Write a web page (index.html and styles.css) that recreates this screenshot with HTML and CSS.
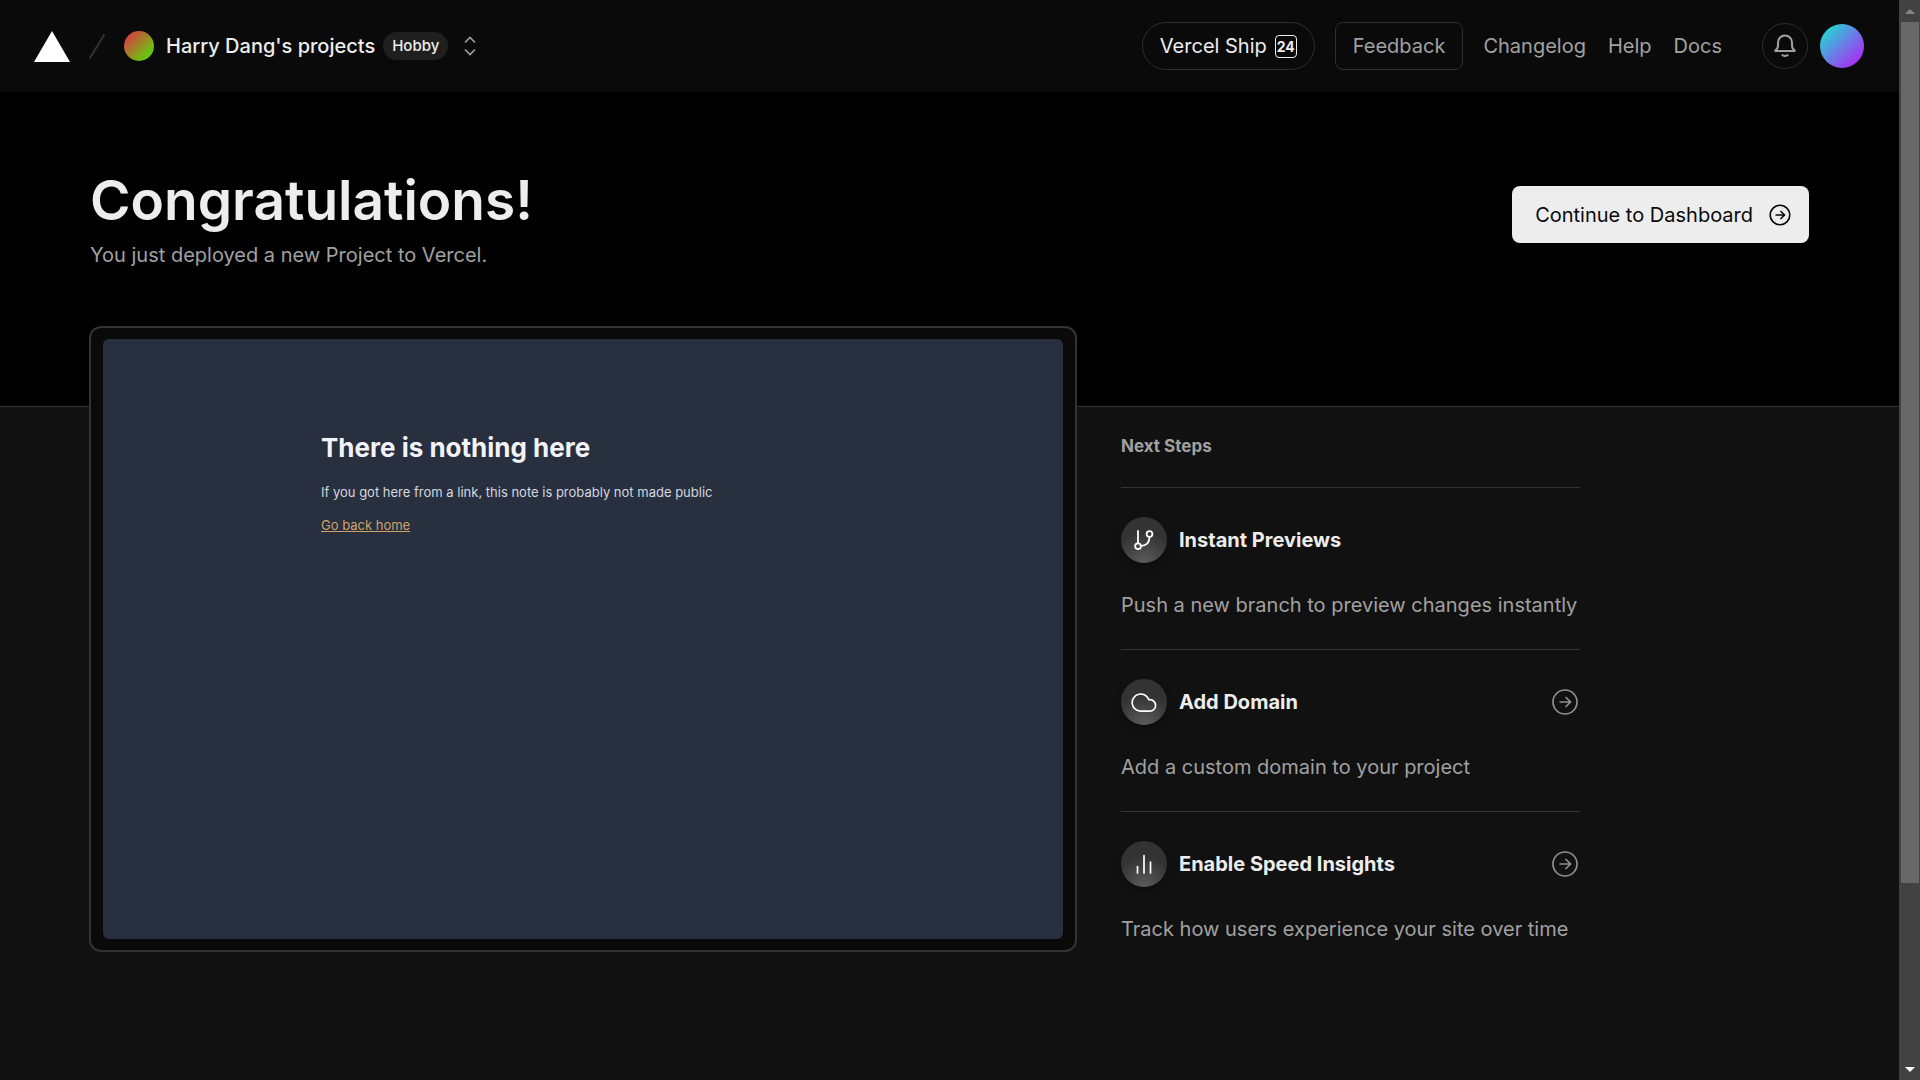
FILE: index.html
```html
<!DOCTYPE html>
<html lang="en">
<head>
<meta charset="utf-8">
<meta name="viewport" content="width=device-width, initial-scale=1">
<title>Congratulations! – Vercel</title>
<link rel="stylesheet" href="styles.css">
</head>
<body>
<div class="window">
  <div class="page">
    <header class="topbar">
      <div class="scope">
        <a class="logo" href="#" aria-label="Vercel">
          <svg width="36" height="31" viewBox="0 0 36 31"><path d="M18 0 36 31H0z" fill="#fff"/></svg>
        </a>
        <svg class="slash" width="18" height="28" viewBox="0 0 18 28" fill="none" stroke="#333" stroke-width="2" stroke-linecap="round"><path d="M2 26 16 3"/></svg>
        <a class="team" href="#"><span class="team-avatar"></span>Harry Dang's projects</a>
        <span class="badge">Hobby</span>
        <button class="switcher" type="button" aria-label="Switch team">
          <svg width="12" height="20" viewBox="0 0 12 20" fill="none" stroke="#a1a1a1" stroke-width="1.6"><path d="M1 6.500 6 1.500l5 5M1 13.500l5 5 5-5"/></svg>
        </button>
      </div>
      <nav class="nav">
        <a class="ship" href="#">Vercel Ship <span class="ship-year">24</span></a>
        <button class="feedback" type="button">Feedback</button>
        <div class="links">
          <a href="#">Changelog</a>
          <a href="#">Help</a>
          <a href="#">Docs</a>
        </div>
        <button class="bell" type="button" aria-label="Notifications">
          <svg width="22" height="24" viewBox="0 0 22 24" fill="none" stroke="#a1a1a1" stroke-width="2"><path d="M1.500 17v-.8c1.700-1 2.500-2.700 2.500-5V8.500a7 7 0 0 1 14 0v2.700c0 2.300.8 4 2.500 5v.8z"/><path d="M7.800 20.500c1.600 2 4.800 2 6.400 0"/></svg>
        </button>
        <button class="avatar" type="button" aria-label="Account"></button>
      </nav>
    </header>

    <section class="hero">
      <div>
        <h1>Congratulations!</h1>
        <p>You just deployed a new Project to Vercel.</p>
      </div>
      <a class="continue" href="#">Continue to Dashboard
        <svg width="22" height="22" viewBox="0 0 22 22" fill="none" stroke="currentColor" stroke-width="1.600"><circle cx="11" cy="11" r="9.800"/><path d="M6.500 11h9M11.500 7l4 4-4 4"/></svg>
      </a>
    </section>

    <main class="content">
      <section class="frame">
        <div class="preview">
          <h2>There is nothing here</h2>
          <p>If you got here from a link, this note is probably not made public</p>
          <a href="#">Go back home</a>
        </div>
      </section>

      <section class="steps">
        <h2>Next Steps</h2>
        <article class="step">
          <div class="step-head">
            <span class="step-icon"><svg width="20" height="22" viewBox="0 0 20 22" fill="none" stroke="#fff" stroke-width="1.800" stroke-linecap="round"><path d="M4 2v12M15.500 8c0 5.500-3 8.700-8.700 8.900"/><circle cx="4" cy="17.200" r="2.900"/><circle cx="15.500" cy="5" r="2.900"/></svg></span>
            <h3>Instant Previews</h3>
          </div>
          <p>Push a new branch to preview changes instantly</p>
        </article>
        <article class="step">
          <div class="step-head">
            <span class="step-icon"><svg width="26" height="22" viewBox="0 0 26 22" fill="none" stroke="#fff" stroke-width="1.700" stroke-linejoin="round"><path d="M17.800 8.600A8.600 8.600 0 1 0 9.600 20.200h9.200a5.800 5.800 0 0 0 0-11.600z"/></svg></span>
            <h3>Add Domain</h3>
            <a class="step-go" href="#" aria-label="Add Domain"><svg width="26" height="26" viewBox="0 0 26 26" fill="none" stroke="currentColor" stroke-width="1.700"><circle cx="13" cy="13" r="12"/><path d="M7.500 13h11M13.500 8l5 5-5 5"/></svg></a>
          </div>
          <p>Add a custom domain to your project</p>
        </article>
        <article class="step">
          <div class="step-head">
            <span class="step-icon"><svg width="20" height="20" viewBox="0 0 20 20" fill="none" stroke="#fff" stroke-width="1.700" stroke-linecap="round"><path d="M3.500 12.500V19M10 1.500V19M16.500 8V19"/></svg></span>
            <h3>Enable Speed Insights</h3>
            <a class="step-go" href="#" aria-label="Enable Speed Insights"><svg width="26" height="26" viewBox="0 0 26 26" fill="none" stroke="currentColor" stroke-width="1.700"><circle cx="13" cy="13" r="12"/><path d="M7.500 13h11M13.500 8l5 5-5 5"/></svg></a>
          </div>
          <p>Track how users experience your site over time</p>
        </article>
      </section>
    </main>
  </div>

  <div class="scrollbar" aria-hidden="true">
    <svg class="scroll-arrow" width="10" height="5" viewBox="0 0 10 5"><path d="M5 0 10 5H0z" fill="#868686"/></svg>
    <div class="scroll-track"><div class="scroll-thumb"></div></div>
    <svg class="scroll-arrow" width="10" height="5" viewBox="0 0 10 5"><path d="M0 0h10L5 5z" fill="#fff"/></svg>
  </div>
</div>
</body>
</html>
```
FILE: styles.css
```css
* { box-sizing: border-box; }
body {
  margin: 0;
  background: #111;
  color: #ededed;
  font: 20px/28px Inter, "Liberation Sans", sans-serif;
}
h1, h2, h3, p { margin: 0; }
a { color: inherit; text-decoration: none; }
button { padding: 0; background: none; border: 0; color: inherit; font: inherit; }
svg { display: block; flex: none; }

.window { display: flex; min-height: 100vh; }
.page { flex: 1; min-width: 0; }

.topbar {
  display: flex;
  align-items: center;
  justify-content: space-between;
  height: 92px;
  padding: 0 35px 0 34px;
  background: #0a0a0a;
}
.scope, .nav, .team, .links { display: flex; align-items: center; }
.slash { margin: 0 18px; }
.team { gap: 12px; font-weight: 500; }
.team-avatar {
  width: 30px;
  height: 30px;
  border-radius: 50%;
  background: linear-gradient(135deg, #f0244c, #45f000);
}
.badge {
  margin: 0 16px 0 8px;
  padding: 0 9px;
  border-radius: 14px;
  background: #1f1f1f;
  font-size: 15px;
  font-weight: 500;
}
.ship, .feedback {
  display: flex;
  align-items: center;
  height: 48px;
  padding: 0 17px;
  border: 1px solid #2e2e2e;
}
.ship { gap: 8px; border-radius: 24px; }
.ship-year {
  width: 22px;
  height: 23px;
  border: 1px solid #ededed;
  border-radius: 4px;
  font-size: 14px;
  font-weight: 700;
  line-height: 21px;
  text-align: center;
}
.feedback { margin-left: 20px; border-radius: 8px; color: #a1a1a1; }
.links { gap: 22px; margin: 0 40px 0 20px; color: #a1a1a1; }
.bell {
  display: grid;
  place-items: center;
  width: 46px;
  height: 46px;
  border: 1px solid #2e2e2e;
  border-radius: 50%;
}
.avatar {
  width: 44px;
  height: 44px;
  margin-left: 12px;
  border-radius: 50%;
  background: linear-gradient(135deg, #0ff0d0, #c010f8);
}

.hero {
  display: flex;
  align-items: flex-start;
  justify-content: space-between;
  height: 315px;
  padding: 76px 90px 0;
  border-bottom: 1px solid #333;
  background: #000;
}
.hero h1 { font-size: 55px; font-weight: 600; line-height: 64px; }
.hero p { margin-top: 9px; color: #a1a1a1; }
.continue {
  display: flex;
  align-items: center;
  gap: 16px;
  height: 57px;
  margin-top: 18px;
  padding: 0 18px 0 23px;
  border-radius: 8px;
  background: #ededed;
  color: #0a0a0a;
}

.content {
  display: flex;
  align-items: flex-start;
  gap: 44px;
  padding: 0 90px 48px 89px;
}
.frame {
  flex: 0 1 988px;
  margin-top: -81px;
  padding: 11px 12px;
  border: 2px solid #333;
  border-radius: 12px;
  background: #0a0a0a;
}
.preview {
  aspect-ratio: 8 / 5;
  padding: 93px 218px 0;
  border-radius: 6px;
  background: #282f3e;
  color: #d4d8e0;
  font-size: 13px;
  line-height: 20px;
}
.preview h2 { margin-bottom: 18px; color: #f1f3f8; font-size: 26px; font-weight: 700; line-height: 32px; }
.preview p { margin-bottom: 13px; white-space: nowrap; }
.preview a { color: #d0a468; text-decoration: underline; }

.steps { flex: 0 1 459px; padding-top: 25px; }
.steps h2 { margin-bottom: 27px; color: #a1a1a1; font-size: 17px; font-weight: 700; }
.step { height: 162px; padding-top: 29px; border-top: 1px solid #333; }
.step-head { display: flex; align-items: center; gap: 12px; }
.step-head h3 { font-size: 20px; font-weight: 700; }
.step-icon {
  display: grid;
  place-items: center;
  width: 46px;
  height: 46px;
  border-radius: 50%;
  background: radial-gradient(circle at 50% 100%, #5c5c5c, #333 60%);
  box-shadow: 0 4px 6px rgba(0, 0, 0, .25);
}
.step-go { margin: 0 2px 0 auto; color: #8f8f8f; }
.step p { margin-top: 28px; color: #a1a1a1; white-space: nowrap; }

.scrollbar {
  display: flex;
  flex-direction: column;
  align-items: center;
  flex: none;
  width: 21px;
  padding: 9px 1px 8px 2px;
  background: #424242;
}
.scroll-track { flex: 1; width: 100%; margin: 8px 0; }
.scroll-thumb { height: 83%; background: #686868; }
```
